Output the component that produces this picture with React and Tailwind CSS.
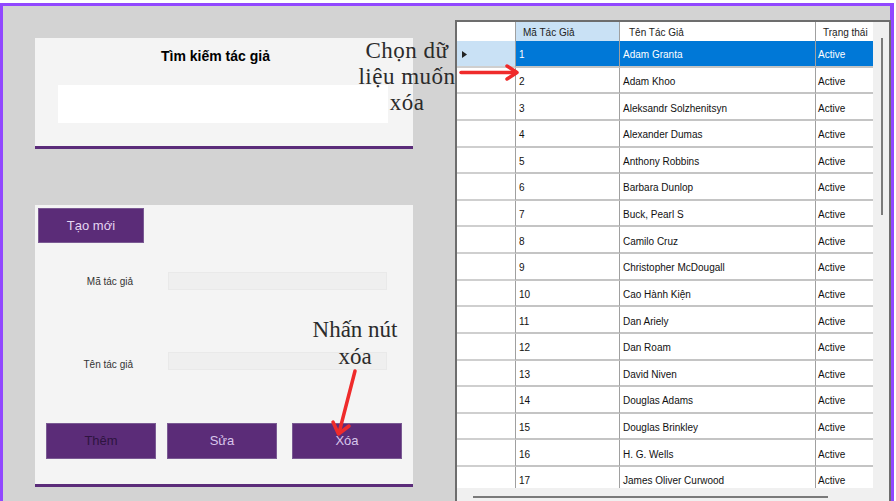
import React from 'react';

const authors = [
  'Adam Granta',
  'Adam Khoo',
  'Aleksandr Solzhenitsyn',
  'Alexander Dumas',
  'Anthony Robbins',
  'Barbara Dunlop',
  'Buck, Pearl S',
  'Camilo Cruz',
  'Christopher McDougall',
  'Cao Hành Kiện',
  'Dan Ariely',
  'Dan Roam',
  'David Niven',
  'Douglas Adams',
  'Douglas Brinkley',
  'H. G. Wells',
  'James Oliver Curwood',
];

function Row({ id, name, selected }) {
  const cell = selected ? 'bg-[#0078d7] text-white' : 'bg-white text-[#111]';
  return (
    <div className="flex h-[26.625px] shrink-0">
      <div className={`w-[59px] border-r border-b-2 border-r-[#a0a0a0] border-b-[#cfcfcf] flex items-center pl-[5px] pt-[2px] ${selected ? 'bg-[#c9e1f5]' : 'bg-white'}`}>
        {selected && (
          <svg width="5" height="7" viewBox="0 0 5 7"><path d="M0 0 L5 3.5 L0 7 Z" fill="#222" /></svg>
        )}
      </div>
      <div className={`w-[104px] border-r border-b-2 border-r-[#a0a0a0] border-b-[#c4c4c4] flex items-center pl-[3px] pt-[3px] ${cell}`}>{id}</div>
      <div className={`w-[196px] border-r border-b-2 border-r-[#a0a0a0] border-b-[#c4c4c4] flex items-center pl-[3px] pt-[3px] ${cell}`}>{name}</div>
      <div className={`w-[57px] border-b-2 border-b-[#c4c4c4] flex items-center pl-[2px] pt-[3px] ${cell}`}>Active</div>
    </div>
  );
}

export default function App() {
  return (
    <div className="relative w-[896px] h-[501px] overflow-hidden bg-white pt-[3px] pr-[2px] font-['Liberation_Sans',Arial,sans-serif]">
      <div className="h-[520px] border-l-[3px] border-t-[3px] border-r-[4px] border-[#9147ff] bg-[#d3d3d3] flex">
        {/* cột trái */}
        <div className="w-[452px] shrink-0 pl-[32px] pt-[32px]">
          {/* tìm kiếm */}
          <div className="w-[378px] bg-[#f4f4f4] border-b-[3px] border-[#5b2c7a] pt-[10px] pb-[23px]">
            <div className="text-center pr-[17px] text-[14px] leading-[16px] font-bold text-black">Tìm kiếm tác giả</div>
            <div className="ml-[23px] mt-[21px] w-[330px] h-[38px] bg-white" />
          </div>

          {/* nhập liệu */}
          <div className="mt-[56px] w-[378px] bg-[#f4f4f4] border-b-[3px] border-[#5b2c7a] pt-[3px] pl-[3px] pb-[25px]">
            <button className="w-[106px] h-[35px] bg-[#5b2c78] border border-[#7a5a93] text-[13px] text-[#e4d6f2]">Tạo mới</button>

            <div className="flex items-center mt-[29px] h-[18px]">
              <div className="w-[95px] text-right text-[10px] text-[#333]">Mã tác giả</div>
              <div className="ml-[35px] w-[219px] h-[18px] bg-[#efefef] border border-[#e9e9e9]" />
            </div>

            <div className="flex items-center mt-[62px] h-[18px]">
              <div className="w-[95px] text-right text-[10px] text-[#333] pt-[6px]">Tên tác giả</div>
              <div className="ml-[35px] w-[219px] h-[18px] bg-[#efefef] border border-[#e9e9e9]" />
            </div>

            <div className="flex mt-[53px] pl-[8px]">
              <button className="w-[110px] h-[36px] bg-[#5b2c78] border border-[#7a5a93] text-[13px] text-[#2e1440]">Thêm</button>
              <button className="ml-[11px] w-[110px] h-[36px] bg-[#5b2c78] border border-[#7a5a93] text-[13px] text-[#d8c6ec]">Sửa</button>
              <button className="ml-[15px] w-[110px] h-[36px] bg-[#5b2c78] border border-[#7a5a93] text-[13px] text-[#d8c6ec]">Xóa</button>
            </div>
          </div>
        </div>

        {/* lưới dữ liệu */}
        <div className="mt-[14px] w-[436px] h-[500px] border-l-2 border-t-2 border-r-2 border-[#6d6d6d] bg-[#f0f0f0] flex text-[10px]">
          <div className="w-[416px] flex flex-col">
            <div className="flex h-[19px] shrink-0 bg-white">
              <div className="w-[59px] border-r border-[#a0a0a0]" />
              <div className="w-[104px] border-r border-[#a0a0a0] bg-[#c9e1f5] flex items-center pl-[7px] pt-[2px] text-[#222]">Mã Tác Giả</div>
              <div className="w-[196px] border-r border-[#a0a0a0] flex items-center pl-[9px] pt-[2px] text-[#222]">Tên Tác Giả</div>
              <div className="w-[57px] flex items-center pl-[7px] pt-[2px] text-[#222]">Trạng thái</div>
            </div>
            <div className="h-[447px] overflow-hidden flex flex-col">
              {authors.map((name, i) => (
                <Row key={i} id={i + 1} name={name} selected={i === 0} />
              ))}
            </div>
            <div className="h-[13px] pt-[8px] pl-[16px]">
              <div className="w-[355px] h-[2px] bg-[#7a7a7a]" />
            </div>
          </div>
          <div className="w-[16px] pt-[16px] pl-[8px]">
            <div className="w-[2px] h-[177px] bg-[#7a7a7a]" />
          </div>
        </div>
      </div>

      {/* chú thích */}
      <div className="absolute left-[352px] top-[38px] w-[110px] text-center text-[23px] leading-[26px] text-[#2b2b2b] font-['Liberation_Serif',serif] tracking-[0.5px]">
        Chọn dữ<br />liệu muốn<br />xóa
      </div>
      <div className="absolute left-[300px] top-[316px] w-[110px] text-center text-[23px] leading-[27px] text-[#2b2b2b] font-['Liberation_Serif',serif]">
        Nhấn nút<br />xóa
      </div>

      <svg className="absolute inset-0 pointer-events-none" width="896" height="501">
        <g stroke="#ef2b2b" strokeWidth="3.5" fill="none" strokeLinecap="round" strokeLinejoin="round">
          <path d="M461 72.5 L516 72.5" />
          <path d="M507 66 L517 72.5 L507 79" />
          <path d="M355 371 L339 433" />
          <path d="M333 422 L338.5 434 L349 426" />
        </g>
      </svg>
    </div>
  );
}
